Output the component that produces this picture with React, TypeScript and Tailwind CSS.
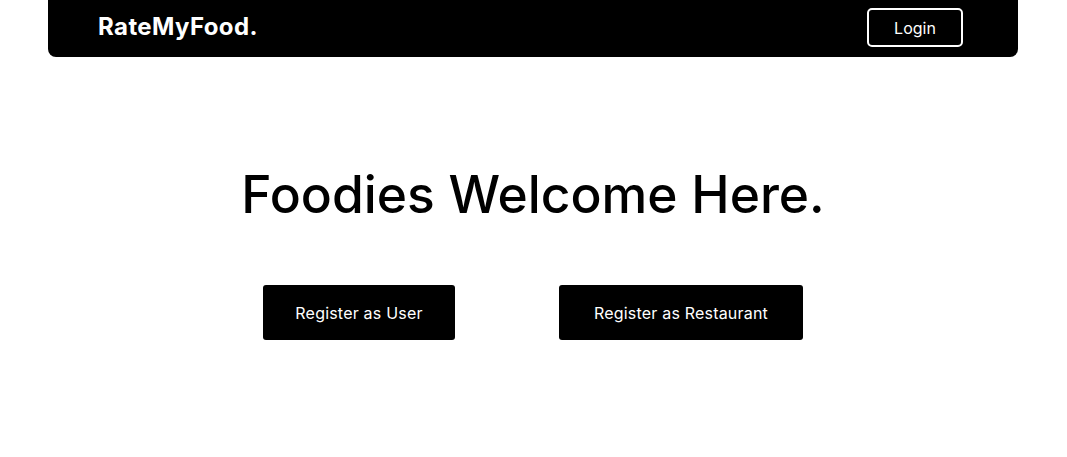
export default function App() {
  return (
    <div className="min-h-[457px] bg-white" style={{ fontFamily: 'Inter, "Open Sans", sans-serif' }}>
      <nav className="ml-[48px] flex h-[57px] w-[970px] items-start justify-between rounded-b-lg bg-black pl-[50px] pr-[55px] pt-[8px]">
        <span className="mt-[3px] text-[24px] font-bold leading-[32px] tracking-[0.4px] text-white">RateMyFood.</span>
        <button className="flex h-[39px] w-[96px] items-center justify-center rounded-[5px] border-2 border-white text-[16px] text-white">
          Login
        </button>
      </nav>
      <main className="flex flex-col items-center pr-px">
        <h1 className="mt-[101px] text-[51.5px] font-medium leading-[72px] text-black">Foodies Welcome Here.</h1>
        <div className="mt-[55px] flex gap-[104px]">
          <button className="flex h-[55px] w-[192px] items-center justify-center rounded-[3px] bg-black text-[16px] tracking-[0.2px] text-white">
            Register as User
          </button>
          <button className="flex h-[55px] w-[244px] items-center justify-center rounded-[3px] bg-black text-[16px] tracking-[0.2px] text-white">
            Register as Restaurant
          </button>
        </div>
      </main>
    </div>
  );
}
